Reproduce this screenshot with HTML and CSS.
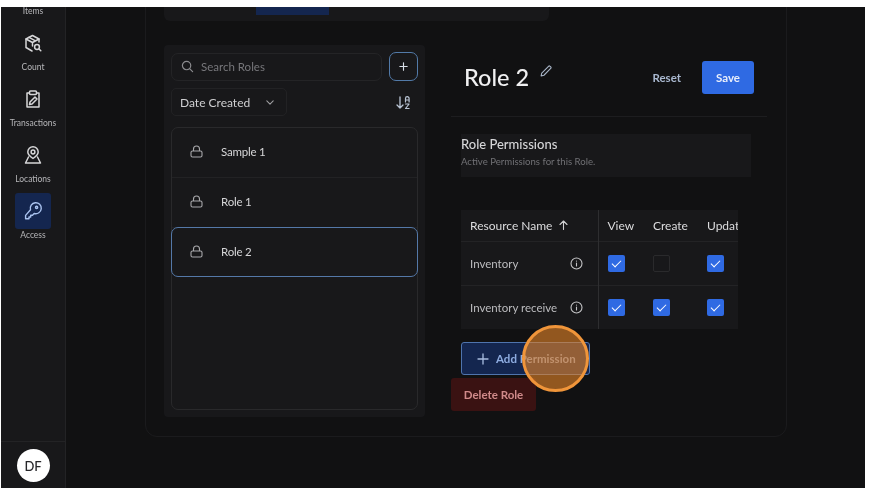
FILE: index.html
```html
<!DOCTYPE html>
<html lang="en">
<head>
    <meta charset="UTF-8">
    <title>Access - Roles</title>
    <link rel="stylesheet" href="styles.css">
</head>
<body>
    <div class="screen">
        <aside class="sidebar">
            <nav class="nav">
                <div class="nav-item"><span class="nav-icon"></span><span class="nav-label">Items</span></div>
                <div class="nav-item">
                    <span class="nav-icon">
                        <svg width="20" height="20" viewBox="0 0 20 20" fill="none" stroke="currentColor" stroke-width="1.5" stroke-linejoin="round" stroke-linecap="round"><path d="M9 18 3 14.5V6l6.500-3.500L16 6v3"/><path d="M3 6l6.500 3.500L16 6M9.500 9.500V13M6 4.300l6.500 3.500"/><circle cx="14" cy="14" r="2.400"/><path d="m16 16 1.800 1.800"/></svg>
                    </span>
                    <span class="nav-label">Count</span>
                </div>
                <div class="nav-item">
                    <span class="nav-icon">
                        <svg width="20" height="20" viewBox="0 0 20 20" fill="none" stroke="currentColor" stroke-width="1.5" stroke-linejoin="round" stroke-linecap="round"><path d="M6.500 4H4v14h12V4h-2.500"/><rect x="6.500" y="2" width="7" height="3.500" rx="1"/><path d="m6.500 15.500.5-2.500 5-5 2 2-5 5z"/></svg>
                    </span>
                    <span class="nav-label">Transactions</span>
                </div>
                <div class="nav-item">
                    <span class="nav-icon">
                        <svg width="20" height="20" viewBox="0 0 20 20" fill="none" stroke="currentColor" stroke-width="1.5" stroke-linejoin="round" stroke-linecap="round"><path d="M10 13.500C7 11.500 4.800 9.500 4.800 7a5.200 5.200 0 0 1 10.400 0c0 2.500-2.200 4.500-5.200 6.500z"/><circle cx="10" cy="7" r="1.900"/><path d="M5.500 12 2.500 18h15l-3-6"/></svg>
                    </span>
                    <span class="nav-label">Locations</span>
                </div>
                <div class="nav-item active">
                    <span class="nav-icon">
                        <svg width="20" height="20" viewBox="0 0 20 20" fill="none" stroke="currentColor" stroke-width="1.4" stroke-linejoin="round" stroke-linecap="round"><path d="M7.500 8.800a5.500 5.500 0 1 1 3.700 3.700L9.500 14.200H7.700V16H6v1.800H2.600v-3.400z"/><circle cx="13.600" cy="6.400" r="1.100"/></svg>
                    </span>
                    <span class="nav-label">Access</span>
                </div>
            </nav>
            <div class="sidebar-foot">
                <div class="avatar">DF</div>
            </div>
        </aside>

        <main class="main">
            <section class="panel">
                <div class="topbar"><span class="topbar-tab"></span></div>

                <div class="columns">
                    <div class="roles">
                        <div class="search-row">
                            <div class="search">
                                <svg width="13" height="13" viewBox="0 0 14 14" fill="none" stroke="#8b8b8e" stroke-width="1.300" stroke-linecap="round"><circle cx="6" cy="6" r="4.500"/><path d="m9.500 9.500 3 3"/></svg>
                                <span>Search Roles</span>
                            </div>
                            <div class="add-role">
                                <svg width="9" height="9" viewBox="0 0 11 11" stroke="#d8dfe8" stroke-width="1.400" stroke-linecap="round"><path d="M5.500 1v9M1 5.500h9"/></svg>
                            </div>
                        </div>
                        <div class="filter-row">
                            <div class="select">
                                <span>Date Created</span>
                                <svg width="8" height="5" viewBox="0 0 10 6" fill="none" stroke="#a0a0a3" stroke-width="1.300" stroke-linecap="round" stroke-linejoin="round"><path d="m1 1 4 4 4-4"/></svg>
                            </div>
                            <svg class="sort-icon" width="15" height="15" viewBox="0 0 15 15" fill="none" stroke="#b9c4d4" stroke-width="1.300" stroke-linecap="round" stroke-linejoin="round"><path d="M4 2v11M1 10l3 3 3-3"/><path d="M9.500 7V3.500a1.800 1.800 0 0 1 3.600 0V7M9.500 5h3.600M9.500 9h3.600l-3.600 4.500h3.600" stroke-width="1.200"/></svg>
                        </div>
                        <ul class="role-list">
                            <li class="role-row">
                                <svg class="lock" width="13" height="13" viewBox="0 0 13 13" fill="none" stroke="#a8a8ab" stroke-width="1.100"><rect x="1" y="6" width="11" height="6" rx="1.500"/><path d="M3.500 6V4a3 3 0 0 1 6 0v2"/></svg>
                                Sample 1
                            </li>
                            <li class="role-row">
                                <svg class="lock" width="13" height="13" viewBox="0 0 13 13" fill="none" stroke="#a8a8ab" stroke-width="1.100"><rect x="1" y="6" width="11" height="6" rx="1.500"/><path d="M3.500 6V4a3 3 0 0 1 6 0v2"/></svg>
                                Role 1
                            </li>
                            <li class="role-row selected">
                                <svg class="lock" width="13" height="13" viewBox="0 0 13 13" fill="none" stroke="#a8a8ab" stroke-width="1.100"><rect x="1" y="6" width="11" height="6" rx="1.500"/><path d="M3.500 6V4a3 3 0 0 1 6 0v2"/></svg>
                                Role 2
                            </li>
                        </ul>
                    </div>

                    <div class="detail">
                        <header class="detail-head">
                            <h1 class="role-title">Role 2</h1>
                            <svg class="pencil" width="12" height="12" viewBox="0 0 11 11" fill="none" stroke="#a9b6c8" stroke-width="1" stroke-linejoin="round"><path d="M1 10l.6-2.600L7.800 1.200a1 1 0 0 1 1.400 0l.6.6a1 1 0 0 1 0 1.400L3.600 9.400z"/></svg>
                            <span class="reset">Reset</span>
                            <button class="save">Save</button>
                        </header>

                        <div class="perm-head">
                            <h2>Role Permissions</h2>
                            <p>Active Permissions for this Role.</p>
                        </div>

                        <div class="table-wrap">
                            <table class="perm-table">
                                <thead>
                                    <tr>
                                        <th class="col-name"><span class="name-cell">Resource Name <svg width="9" height="10" viewBox="0 0 9 10" fill="none" stroke="#d0d0d2" stroke-width="1.100" stroke-linecap="round" stroke-linejoin="round"><path d="M4.500 9.500V1M1 4.500 4.500 1 8 4.500"/></svg></span></th>
                                        <th class="col-view">View</th>
                                        <th class="col-create">Create</th>
                                        <th class="col-update">Update</th>
                                    </tr>
                                </thead>
                                <tbody>
                                    <tr>
                                        <td class="col-name"><span class="name-cell">Inventory <svg class="info" width="13" height="13" viewBox="0 0 13 13" fill="none" stroke="#c4c4c6" stroke-width="1.100" stroke-linecap="round"><circle cx="6.500" cy="6.500" r="5.500"/><path d="M6.500 6v3M6.500 4v.1"/></svg></span></td>
                                        <td class="col-view"><span class="check on"></span></td>
                                        <td class="col-create"><span class="check"></span></td>
                                        <td class="col-update"><span class="check on"></span></td>
                                    </tr>
                                    <tr>
                                        <td class="col-name"><span class="name-cell">Inventory receive <svg class="info" width="13" height="13" viewBox="0 0 13 13" fill="none" stroke="#c4c4c6" stroke-width="1.100" stroke-linecap="round"><circle cx="6.500" cy="6.500" r="5.500"/><path d="M6.500 6v3M6.500 4v.1"/></svg></span></td>
                                        <td class="col-view"><span class="check on"></span></td>
                                        <td class="col-create"><span class="check on"></span></td>
                                        <td class="col-update"><span class="check on"></span></td>
                                    </tr>
                                </tbody>
                            </table>
                        </div>

                        <button class="add-perm">
                            <svg width="12" height="12" viewBox="0 0 12 12" stroke="#a9bde0" stroke-width="1.300" stroke-linecap="round"><path d="M6 1v10M1 6h10"/></svg>
                            Add Permission
                        </button>
                        <button class="delete-role">Delete Role</button>
                    </div>
                </div>
            </section>
        </main>

        <div class="click-mark"></div>
    </div>
</body>
</html>
```

FILE: styles.css
```css
* {
    box-sizing: border-box;
}

html, body {
    margin: 0;
    height: 100%;
    overflow: hidden;
    background: #ffffff;
}

body {
    font-family: "Lato", "Open Sans", sans-serif;
    color: #d2d2d4;
}

.screen {
    position: relative;
    display: flex;
    height: 481px;
    margin: 7px 9px 0 1px;
    overflow: hidden;
    background: #111112;
    filter: blur(0.4px);
}

/* sidebar */
.sidebar {
    display: flex;
    flex-direction: column;
    justify-content: space-between;
    width: 65px;
    border-right: 1px solid #232325;
    background: #18181a;
}

.nav {
    margin-top: -38px;
}

.nav-item {
    display: flex;
    flex-direction: column;
    align-items: center;
    height: 56px;
}

.nav-icon {
    display: flex;
    align-items: center;
    justify-content: center;
    width: 36px;
    height: 36px;
    color: #d6d6d8;
    border-radius: 3px;
}

.nav-label {
    margin-top: 1px;
    font-size: 8.5px;
    line-height: 11px;
    color: #b6b6b9;
}

.nav-item.active .nav-icon {
    background: #14264f;
    color: #a9c2ee;
}

.sidebar-foot {
    display: flex;
    justify-content: center;
    height: 47px;
    padding-top: 7px;
    border-top: 1px solid #232325;
}

.avatar {
    display: flex;
    align-items: center;
    justify-content: center;
    width: 33px;
    height: 33px;
    border-radius: 50%;
    background: #ffffff;
    color: #26262a;
    font-size: 13px;
    font-weight: 500;
}

/* main */
.main {
    flex: 1;
    padding-left: 79px;
}

.panel {
    width: 642px;
    height: 460px;
    margin-top: -30px;
    padding: 9px 18px 0;
    border: 1px solid #1b1b1d;
    border-radius: 12px;
}

.topbar {
    width: 385px;
    height: 34px;
    border-radius: 6px;
    background: #18181a;
}

.topbar-tab {
    display: block;
    width: 73px;
    height: 28px;
    margin-left: 92px;
    background: #14264f;
}

.columns {
    display: flex;
    gap: 26px;
    margin-top: 24px;
}

/* roles column */
.roles {
    width: 261px;
    height: 372px;
    padding: 7px;
    border-radius: 4px;
    background: #18181a;
}

.search-row, .filter-row {
    display: flex;
    align-items: center;
    justify-content: space-between;
}

.search {
    display: flex;
    align-items: center;
    gap: 7px;
    width: 211px;
    height: 28px;
    padding-left: 9px;
    border: 1px solid #242426;
    border-radius: 7px;
    font-size: 11.5px;
    color: #77777b;
}

.add-role {
    display: flex;
    align-items: center;
    justify-content: center;
    width: 29px;
    height: 29px;
    border: 1px solid #527aa8;
    border-radius: 7px;
}

.filter-row {
    margin-top: 7px;
}

.select {
    display: flex;
    align-items: center;
    justify-content: space-between;
    width: 116px;
    height: 28px;
    padding: 0 12px 0 8px;
    border: 1px solid #222224;
    border-radius: 5px;
    font-size: 12px;
    color: #cfcfd1;
}

.sort-icon {
    margin-right: 7px;
}

.role-list {
    height: 283px;
    margin: 11px 0 0;
    padding: 0;
    list-style: none;
    border: 1px solid #29292b;
    border-radius: 7px;
}

.role-row {
    display: flex;
    align-items: center;
    height: 50px;
    padding: 0 0 2px 18px;
    border-bottom: 1px solid #222224;
    font-size: 11.5px;
    letter-spacing: -0.2px;
    color: #d6d6d8;
}

.role-row.selected {
    margin: -1px;
    border: 1px solid #5478a8;
    border-radius: 7px;
}

.lock {
    margin-right: 18px;
}

/* detail column */
.detail {
    width: 316px;
    position: relative;
}

.detail-head {
    display: flex;
    align-items: center;
    height: 72px;
    padding: 0 13px 7px 13px;
    border-bottom: 1px solid #1d1d1f;
}

.role-title {
    margin: 0;
    font-size: 23.5px;
    font-weight: 500;
    color: #f0f0f1;
}

.pencil {
    margin: -13px 0 0 11px;
}

.reset {
    margin-left: auto;
    font-size: 11.5px;
    font-weight: 700;
    color: #a9b8cf;
}

.save {
    width: 52px;
    height: 33px;
    margin-left: 21px;
    border: 0;
    border-radius: 3px;
    background: #2f6ae3;
    color: #e8eefb;
    font: 700 11.5px "Lato", sans-serif;
}

.perm-head {
    width: 290px;
    height: 43px;
    margin: 17px 0 0 10px;
    padding-top: 2px;
    background: #18181a;
}

.perm-head h2 {
    margin: 0;
    font-size: 13px;
    line-height: 16px;
    font-weight: 500;
    color: #d6d6d8;
}

.perm-head p {
    margin: 4px 0 0;
    font-size: 9.6px;
    line-height: 12px;
    color: #717175;
}

.table-wrap {
    width: 277px;
    height: 119px;
    margin: 33px 0 0 10px;
    overflow: hidden;
    background: #18181a;
}

.perm-table {
    width: 316px;
    border-collapse: collapse;
    table-layout: fixed;
    font-size: 11.5px;
}

.perm-table th {
    height: 31px;
    padding: 0 0 0 10px;
    text-align: left;
    font-size: 12px;
    font-weight: 400;
    color: #dcdcde;
}

.perm-table td {
    height: 44px;
    padding: 0 0 0 10px;
    border-top: 1px solid #232325;
    color: #bcbcbf;
}

.perm-table .col-name {
    width: 137px;
    padding: 0 16px 0 9px;
    border-right: 1px solid #2e2e30;
}

.perm-table .col-view {
    width: 45px;
    padding-left: 9px;
}

.col-create {
    width: 54px;
}

.col-update {
    width: 80px;
}

.name-cell {
    display: flex;
    align-items: center;
    justify-content: space-between;
    white-space: nowrap;
    margin-right: -1px;
}

.perm-table th .name-cell {
    justify-content: flex-start;
    gap: 7px;
}

.check {
    display: flex;
    align-items: center;
    justify-content: center;
    width: 17px;
    height: 17px;
    border: 1px solid #2a2a2c;
    border-radius: 2px;
}

.check.on {
    border: 0;
    background: #2f6ae3;
}

.check.on::after {
    content: "";
    width: 8px;
    height: 4px;
    margin-top: -2px;
    border-left: 1.5px solid #ffffff;
    border-bottom: 1.5px solid #ffffff;
    transform: rotate(-45deg);
}

.add-perm {
    display: flex;
    align-items: center;
    gap: 7px;
    width: 129px;
    height: 33px;
    margin: 13px 0 0 10px;
    padding: 0 0 0 15px;
    border: 1px solid #4f74ad;
    border-radius: 3px;
    background: #14264f;
    color: #8dabdf;
    font: 700 11.5px "Lato", sans-serif;
}

.delete-role {
    display: block;
    width: 85px;
    height: 33px;
    margin-top: 3px;
    border: 0;
    border-radius: 3px;
    background: #3a1212;
    color: #d08a8a;
    font: 700 11.5px "Lato", sans-serif;
}

/* orange click marker over the button */
.click-mark {
    position: absolute;
    left: 521px;
    top: 318px;
    width: 67px;
    height: 67px;
    border: 3px solid #f0953a;
    border-radius: 50%;
    background: rgba(226, 130, 40, 0.62);
}
```
